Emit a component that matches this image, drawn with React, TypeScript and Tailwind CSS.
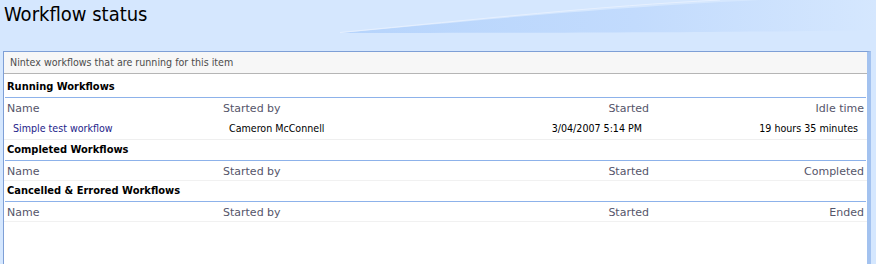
import React from 'react'

const body = { fontFamily: '"DejaVu Sans Condensed", Tahoma, "Liberation Sans", sans-serif' }
const head = { fontFamily: '"DejaVu Sans", Verdana, sans-serif' }

type Section = {
  title: string
  last: string
  rows: { name: string; by: string; started: string; last: string }[]
}

const sections: Section[] = [
  {
    title: 'Running Workflows',
    last: 'Idle time',
    rows: [
      {
        name: 'Simple test workflow',
        by: 'Cameron McConnell',
        started: '3/04/2007 5:14 PM',
        last: '19 hours 35 minutes',
      },
    ],
  },
  { title: 'Completed Workflows', last: 'Completed', rows: [] },
  { title: 'Cancelled & Errored Workflows', last: 'Ended', rows: [] },
]

function Swoosh() {
  return (
    <svg className="absolute left-0 top-0" width="876" height="51" viewBox="0 0 876 51">
      <defs>
        <linearGradient id="sw" x1="0" y1="0" x2="1" y2="0">
          <stop offset="0" stopColor="#b6d4fc" />
          <stop offset="0.55" stopColor="#c2dbfd" />
          <stop offset="1" stopColor="#d5e7fe" />
        </linearGradient>
      </defs>
      <path d="M340 33 C 480 20, 600 8, 760 0 L 876 0 L 876 30 C 780 32, 600 33, 340 33 Z" fill="url(#sw)" />
      <path d="M340 32.5 C 480 19, 600 6, 720 0" stroke="#e6f0ff" strokeWidth="1" fill="none" />
    </svg>
  )
}

export default function App() {
  return (
    <div className="relative w-[876px] h-[264px] overflow-hidden bg-[#d5e7fe]">
      <Swoosh />
      <div className="relative h-[51px] pl-[4px] pt-[1px] text-[20px] leading-[26px] text-black" style={body}>
        Workflow status
      </div>

      <div className="relative ml-[3px] w-[868px] h-[220px] bg-white border border-[#7e9fd6] border-r-[4px] border-r-[#a3c2ef]">
        <div className="h-[22px] bg-[#f7f7f7] border-b border-[#b5b5b5] pl-[6px] text-[10.6px] leading-[21px] text-[#4c4c4c]" style={body}>
          Nintex workflows that are running for this item
        </div>

        {sections.map((s, i) => (
          <div key={s.title}>
            <div
              className={`pl-[3px] text-[11px] leading-[13px] font-bold text-black ${i === 0 ? 'h-[23px] pt-[6px]' : 'h-[20px] pt-[3px]'}`}
              style={body}
            >
              {s.title}
            </div>
            <div className="mx-[1px] h-px bg-[#8db2ea]" />
            <div
              className={`grid grid-cols-[216px_1fr_1fr_215px] h-[20px] items-start pt-[4px] leading-[13px] px-[3px] text-[11px] text-[#55556a] ${s.rows.length ? '' : 'border-b border-[#f1f1f1]'}`}
              style={head}
            >
              <span>Name</span>
              <span>Started by</span>
              <span className="text-right">Started</span>
              <span className="text-right">{s.last}</span>
            </div>
            {s.rows.map((r) => (
              <div
                key={r.name}
                className="grid grid-cols-[216px_1fr_1fr_215px] h-[22px] items-center px-[3px] text-[10.6px] border-b border-[#efefef]"
                style={body}
              >
                <span className="pl-[6px] text-[#24248a]">{r.name}</span>
                <span className="pl-[6px] text-black">{r.by}</span>
                <span className="text-right pr-[7px] text-black">{r.started}</span>
                <span className="text-right pr-[6px] text-black">{r.last}</span>
              </div>
            ))}
          </div>
        ))}
      </div>
    </div>
  )
}
